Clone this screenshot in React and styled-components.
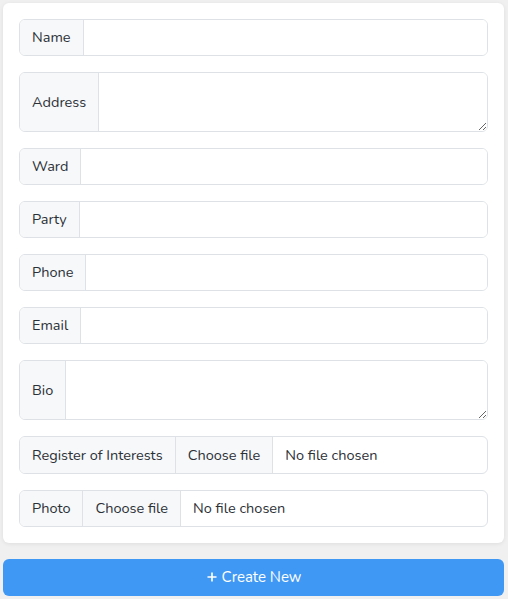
import styled, { createGlobalStyle } from "styled-components";

const GlobalStyle = createGlobalStyle`
  * { box-sizing: border-box; }
  body {
    margin: 0;
    background: #f0f0f0;
    font-family: "Nunito", "Lato", "Noto Sans", sans-serif;
    color: #212529;
  }
`;

const fields = [
  { label: "Name", type: "text" },
  { label: "Address", type: "area" },
  { label: "Ward", type: "text" },
  { label: "Party", type: "text" },
  { label: "Phone", type: "text" },
  { label: "Email", type: "text" },
  { label: "Bio", type: "area" },
  { label: "Register of Interests", type: "file" },
  { label: "Photo", type: "file" },
];

function App() {
  return (
    <>
      <GlobalStyle />
      <Page>
        <Card>
          {fields.map((f) => (
            <Group key={f.label}>
              <Addon>{f.label}</Addon>
              {f.type === "area" && <TextArea />}
              {f.type === "text" && <TextInput type="text" />}
              {f.type === "file" && (
                <FileField>
                  <HiddenFile type="file" />
                  <FileButton>Choose file</FileButton>
                  <FileName>No file chosen</FileName>
                </FileField>
              )}
            </Group>
          ))}
        </Card>
        <CreateButton>
          <Plus viewBox="0 0 16 16">
            <path d="M8 2v12M2 8h12" stroke="#fff" strokeWidth="2.2" fill="none" />
          </Plus>
          Create New
        </CreateButton>
      </Page>
    </>
  );
}

const Page = styled.div`
  padding: 3px 4px 3px 3px;
  display: flex;
  flex-direction: column;
  gap: 16px;
`;

const Card = styled.div`
  background: #fff;
  border-radius: 6px;
  box-shadow: 0 1px 4px rgba(0, 0, 0, 0.08);
  padding: 16px 16px 0 16px;
`;

const Group = styled.div`
  display: flex;
  align-items: stretch;
  margin-bottom: 16px;
  border: 1px solid #dee2e6;
  border-radius: 6px;
  overflow: hidden;
`;

const Addon = styled.span`
  display: flex;
  align-items: center;
  padding: 0 12px 1px;
  background: #f7f8fa;
  border-right: 1px solid #dee2e6;
  font-size: 14.5px;
  color: #2b3036;
  white-space: nowrap;
`;

const TextInput = styled.input`
  flex: 1;
  min-width: 0;
  height: 35.1px;
  border: 0;
  outline: none;
  padding: 0 12px;
  font: inherit;
`;

const TextArea = styled.textarea`
  flex: 1;
  min-width: 0;
  height: 58px;
  border: 0;
  outline: none;
  padding: 6px 12px;
  font: inherit;
  resize: vertical;
`;

const FileField = styled.label`
  flex: 1;
  display: flex;
  align-items: stretch;
  height: 35.1px;
  font-size: 14.5px;
  color: #2b3036;
`;

const HiddenFile = styled.input`
  display: none;
`;

const FileButton = styled.span`
  display: flex;
  align-items: center;
  padding: 0 12px 1px;
  background: #f7f8fa;
  border-right: 1px solid #dee2e6;
  white-space: nowrap;
`;

const FileName = styled.span`
  display: flex;
  align-items: center;
  padding: 0 12px 1px;
`;

const CreateButton = styled.button`
  display: flex;
  align-items: center;
  justify-content: center;
  gap: 4px;
  height: 37px;
  border: 0;
  border-radius: 6px;
  background: #4098f5;
  color: #fff;
  font-family: inherit;
  font-size: 15px;
`;

const Plus = styled.svg`
  width: 12px;
  height: 12px;
`;

export default App;
